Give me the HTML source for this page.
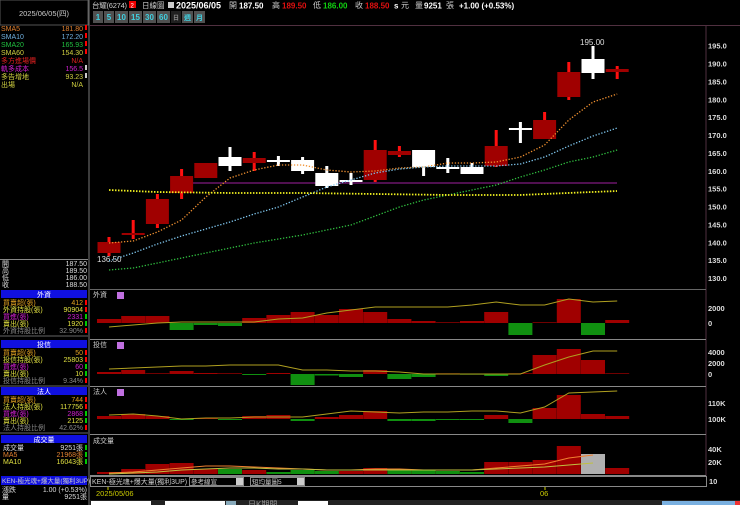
<!DOCTYPE html><html><head><meta charset="utf-8"><style>
body{margin:0;width:740px;height:505px;background:#000;overflow:hidden;font-family:"Liberation Sans","Noto Sans CJK TC",sans-serif;}
svg text{font-family:"Liberation Sans","Noto Sans CJK TC",sans-serif;}
</style></head><body>
<svg id="s" width="740" height="505" xmlns="http://www.w3.org/2000/svg" style="position:absolute;left:0;top:0">
<rect width="740" height="505" fill="#000"/>
<rect x="0" y="0" width="88" height="25" fill="#000" stroke="#555" stroke-width="1"/>
<text x="44" y="16" fill="#ccc" font-size="7.5" text-anchor="middle">2025/06/05(四)</text>
<line x1="89" y1="0" x2="89" y2="505" stroke="#777"/>
<g font-size="7" id="lp"></g>
<g font-size="8">
<text x="92" y="8" fill="#ccc" font-size="7.5" textLength="35">台耀(6274)</text>
<rect x="129" y="1" width="7" height="7" fill="#e00"/><text x="130.5" y="7.5" fill="#fff" font-size="6">2</text>
<text x="142" y="8" fill="#ccc" font-size="7.5">日線圖</text>
<rect x="168" y="2" width="6" height="6" fill="#ccc"/>
<text x="176" y="8.5" fill="#fff" font-size="9" font-weight="bold">2025/06/05</text>
<text x="229" y="8" fill="#ccc">開</text><text x="239" y="8.5" fill="#fff" font-weight="bold">187.50</text>
<text x="272" y="8" fill="#ccc">高</text><text x="282" y="8.5" fill="#e01010" font-weight="bold">189.50</text>
<text x="313" y="8" fill="#ccc">低</text><text x="323" y="8.5" fill="#10d010" font-weight="bold">186.00</text>
<text x="355" y="8" fill="#ccc">收</text><text x="365" y="8.5" fill="#e01010" font-weight="bold">188.50</text>
<text x="394" y="8.5" fill="#fff" font-weight="bold">s</text><text x="401" y="8" fill="#ccc">元</text>
<text x="415" y="8" fill="#ccc">量</text><text x="424" y="8.5" fill="#fff" font-weight="bold">9251</text><text x="446" y="8" fill="#ccc">張</text>
<text x="459" y="8.5" fill="#fff" font-weight="bold">+1.00 (+0.53%)</text>
</g>
<g id="btn" font-size="8" font-weight="bold"></g>
<line x1="90" y1="25.5" x2="740" y2="25.5" stroke="#503040"/>
<g fill="none" stroke="#555">
<line x1="706" y1="26" x2="706" y2="476" stroke="#503040"/>
<line x1="90" y1="289.5" x2="706" y2="289.5" stroke="#666"/>
<line x1="90" y1="339.5" x2="706" y2="339.5" stroke="#888"/>
<line x1="90" y1="386.5" x2="706" y2="386.5" stroke="#888"/>
<line x1="90" y1="434.5" x2="706" y2="434.5" stroke="#888"/>
<line x1="90" y1="475.5" x2="706" y2="475.5" stroke="#888"/>
</g>
<g id="g"></g>
<g font-size="7" fill="#ccc">
<text x="93" y="297">外資</text><text x="93" y="347">投信</text><text x="93" y="394">法人</text><text x="93" y="443">成交量</text>
</g>
<rect x="117" y="292" width="7" height="7" fill="#c070e0"/><rect x="117" y="342" width="7" height="7" fill="#c070e0"/><rect x="117" y="389" width="7" height="7" fill="#c070e0"/>
<g font-size="7.5" fill="#ddd" font-weight="bold" id="ax"></g>
<rect x="90.5" y="476.5" width="616" height="10" fill="#000" stroke="#888"/>
<text x="92" y="484" fill="#ccc" font-size="7">KEN-極光魂+爆大量(獨利3UP)</text>
<rect x="189.5" y="477.5" width="54" height="8" fill="#000" stroke="#888"/><text x="191" y="484" fill="#ccc" font-size="6.5">參考線宣</text><rect x="236" y="478" width="7" height="7" fill="#ccc"/>
<rect x="250.5" y="477.5" width="54" height="8" fill="#000" stroke="#888"/><text x="252" y="484" fill="#ccc" font-size="6.5">短均量圖5</text><rect x="297" y="478" width="7" height="7" fill="#ccc"/>
<text x="709" y="484" fill="#ddd" font-size="7.5" font-weight="bold">10</text>
<line x1="108" y1="487" x2="108" y2="490" stroke="#cc0"/><line x1="545" y1="487" x2="545" y2="490" stroke="#cc0"/>
<text x="96" y="496" fill="#cc0" font-size="7.5">2025/05/06</text><text x="540" y="496" fill="#cc0" font-size="7.5">06</text>
<rect x="90" y="500" width="650" height="5" fill="#222"/>
<rect x="91" y="501" width="60" height="4" fill="#fff"/><rect x="165" y="501" width="60" height="4" fill="#fff"/><rect x="226" y="501" width="10" height="4" fill="#8ab"/>
<text x="248" y="507" fill="#999" font-size="8">日K期間</text><rect x="298" y="501" width="30" height="4" fill="#fff"/>
<rect x="662" y="501" width="78" height="4" fill="#7ab0e0"/><rect x="735" y="501" width="5" height="4" fill="#e33"/>
</svg>
<script>
const N='http://www.w3.org/2000/svg';
function el(p,t,a,txt){const e=document.createElementNS(N,t);for(const k in a)e.setAttribute(k,a[k]);if(txt!==undefined)e.textContent=txt;document.getElementById(p).appendChild(e);return e;}
const lp=[[35,'SMA5','181.80','#e08030','#e08030','r'],[43,'SMA10','172.20','#70b0e0','#70b0e0','r'],[51,'SMA20','165.93','#20c040','#20c040','r'],[59,'SMA60','154.30','#d0d040','#d0d040','r'],[67,'多方進場價','N/A','#e02020','#e02020',''],[75,'軌多成本','156.5','#d020d0','#d020d0','w'],[83,'多告增地','93.23','#d0d040','#d0d040','w'],[91,'出場','N/A','#d0d040','#d0d040','']];
lp.forEach(r=>{el('lp','text',{x:1,y:r[0]-4,fill:r[3]},r[1]);el('lp','text',{x:83,y:r[0]-4,fill:r[4],'text-anchor':'end'},r[2]);if(r[5])el('lp','rect',{x:85,y:r[0]-10,width:2,height:5,fill:r[5]=='r'?'#f00':'#ccc'});});
el('lp','line',{x1:0,y1:259.5,x2:88,y2:259.5,stroke:'#888'});
[['開','187.50'],['高','189.50'],['低','186.00'],['收','188.50']].forEach((r,i)=>{el('lp','text',{x:2,y:266+i*7,fill:'#ddd'},r[0]);el('lp','text',{x:87,y:266+i*7,fill:'#ddd','text-anchor':'end'},r[1]);});
function sect(y,title,rows){el('lp','rect',{x:1,y:y,width:86,height:8,fill:'#1010e0'});el('lp','text',{x:44,y:y+7,fill:'#fff','text-anchor':'middle'},title);
rows.forEach((r,i)=>{const yy=y+15+i*7;el('lp','text',{x:3,y:yy,fill:r[2]},r[0]);el('lp','text',{x:83,y:yy,fill:r[3]||r[2],'text-anchor':'end'},r[1]);if(r[4])el('lp','rect',{x:85,y:yy-5,width:2,height:5,fill:r[4]});});
el('lp','line',{x1:0,y1:y+15+rows.length*7-4,x2:88,y2:y+15+rows.length*7-4,stroke:'#666'});}
sect(290,'外資',[['買賣超(張)','412','#e0a020','#e0a020','#f00'],['外資持股(張)','90904','#e0e040','#e0e040','#f00'],['買進(張)','2331','#d020d0','#d020d0','#0c0'],['賣出(張)','1920','#e0e040','#e0e040','#0c0'],['外資持股比例','32.90%','#888','#888','#f00']]);
sect(340,'投信',[['買賣超(張)','50','#e0a020','#e0a020','#f00'],['投信持股(張)','25803','#e0e040','#e0e040','#f00'],['買進(張)','60','#d020d0','#d020d0','#0c0'],['賣出(張)','10','#e0e040','#e0e040','#0c0'],['投信持股比例','9.34%','#888','#888','#f00']]);
sect(387,'法人',[['買賣超(張)','744','#e0a020','#e0a020','#f00'],['法人持股(張)','117756','#e0e040','#e0e040','#f00'],['買進(張)','2868','#d020d0','#d020d0','#0c0'],['賣出(張)','2125','#e0e040','#e0e040','#0c0'],['法人持股比例','42.62%','#888','#888','#f00']]);
el('lp','rect',{x:1,y:435,width:86,height:8,fill:'#1010e0'});el('lp','text',{x:44,y:442,fill:'#fff','text-anchor':'middle'},'成交量');
[['成交量','9251張','#ddd'],['MA5','21968張','#e08030'],['MA10','16043張','#e0e040']].forEach((r,i)=>{el('lp','text',{x:3,y:450+i*7,fill:r[2]},r[0]);el('lp','text',{x:83,y:450+i*7,fill:r[2],'text-anchor':'end'},r[1]);el('lp','rect',{x:85,y:445+i*7,width:2,height:5,fill:'#0c0'});});
el('lp','rect',{x:1,y:476,width:86,height:9,fill:'#1010e0'});el('lp','text',{x:2,y:483,fill:'#ccc','font-size':6.5},'KEN-極光魂+爆大量(獨利3UP)');
el('lp','text',{x:2,y:492,fill:'#ddd'},'漲跌');el('lp','text',{x:87,y:492,fill:'#ddd','text-anchor':'end'},'1.00 (+0.53%)');
el('lp','text',{x:2,y:499,fill:'#ddd'},'量');el('lp','text',{x:87,y:499,fill:'#ddd','text-anchor':'end'},'9251張');
const bs=['1','5','10','15','30','60'];let bx=93;
bs.forEach(b=>{const w=b.length>1?13:10;el('btn','rect',{x:bx,y:11,width:w,height:12,fill:'#505050'});el('btn','text',{x:bx+w/2,y:20,fill:'#40d0e0','text-anchor':'middle'},b);bx+=w+1;});
el('btn','rect',{x:bx,y:11,width:10,height:12,fill:'#202020'});el('btn','text',{x:bx+5,y:20,fill:'#888','text-anchor':'middle','font-size':6},'日');bx+=11;
['週','月'].forEach(b=>{el('btn','rect',{x:bx,y:11,width:11,height:12,fill:'#505050'});el('btn','text',{x:bx+5.5,y:20,fill:'#40d0e0','text-anchor':'middle','font-size':7},b);bx+=12;});
const py=p=>45.7+(195-p)*3.574;
for(let p=130;p<=195;p+=5)el('ax','text',{x:708,y:py(p)+3},p.toFixed(1));
[['2000',311],['0',326],['4000',355],['2000',366],['0',377],['110K',406],['100K',422],['40K',452],['20K',465]].forEach(a=>el('ax','text',{x:708,y:a[1]},a[0]));
const X=i=>109+(i-1)*24.2;
const C=[[242,253,237,256,'r'],[233,235,220,239,'r'],[199,224,194,228,'r'],[176,193,169,199,'r'],[163,178,163,178,'r'],[157,166,147,171,'w'],[158,163,152,171,'r'],[160,162,156,166,'w'],[160,171,157,174,'w'],[173,186,166,188,'w'],[180,182,173,185,'w'],[150,180,140,182,'r'],[151,155,146,157,'r'],[150,167,150,176,'w'],[167,169,158,173,'w'],[167,174,163,174,'w'],[146,166,130,167,'r'],[128,130,122,143,'w'],[120,139,112,139,'r'],[72,97,62,100,'r'],[59,73,46,79,'w'],[69,72,66,79,'r']];
const g='g';
el(g,'line',{x1:190,y1:183,x2:617,y2:183,stroke:'#a020a0','stroke-width':1});
C.forEach((c,k)=>{const x=X(k+1);const col=c[4]=='r'?'#a00000':'#fff';const wc=c[4]=='r'?'#ff1010':'#fff';
el(g,'rect',{x:x-1.5,y:c[2],width:3,height:c[3]-c[2],fill:wc});
el(g,'rect',{x:x-11.5,y:c[0],width:23,height:Math.max(2,c[1]-c[0]),fill:col});});
el(g,'text',{x:580,y:45,fill:'#ddd','font-size':8},'195.00');
el(g,'text',{x:97,y:262,fill:'#ddd','font-size':8},'136.50');
function line(pts,col,dash,w){el(g,'polyline',{points:pts.map(p=>p.join(',')).join(' '),fill:'none',stroke:col,'stroke-width':w||1.3,'stroke-dasharray':dash||''});}
const ix=a=>a.map((y,i)=>[X(i+1),y]);
line(ix([243,241,232,220,197,178,170,165,165,170,172,171,168,167,163,163,162,157,145,120,102,94]),'#f09030','1.3 1.7');
line(ix([261,253,244,236,229,222,214,207,197,187,180,173,169,167,166,166,166,164,157,146,136,128]),'#80c8f0','1.3 1.7');
line(ix([270,268,263,258,253,248,243,239,235,230,225,216,207,200,195,190,185,177,170,162,157,150]),'#30c040','1.3 1.7');
line([[109,190],[157,192],[230,193],[302,193],[375,194],[450,195],[520,195],[568,193],[617,191]],'#f0f020','1.5 1.5',1.8);
function bars(zero,vals,gray){vals.forEach((v,k)=>{const x=X(k+1);let col=v>=0?'#a00000':'#109010';if(gray&&gray==k+1)col='#b0b0b0';
const h=Math.max(0.7,Math.abs(v));el(g,'rect',{x:x-12,y:v>=0?zero-h:zero,width:24,height:h,fill:col});});}
bars(323,[4,7,7,-7,-2,-3,5,8,11,8,14,11,4,2,0.5,2,11,-12,0.5,24,-12,3]);
bars(374,[2,4,0.5,3,1,0.5,-1,1,-11,-1.5,-3,4,-5,-3,0.5,-0.5,-2,0.5,19,25,14,0.5]);
bars(419,[3,5,3,-1,0.5,-1,3,4,-2,2,4,8,-2,-2,-1,-1,4,-4,11,24,5,3]);
bars(474,[2,5,10,11,5,5,4,2,4,3,3,6,4,4,3,2,12,12,14,28,20,6],21);
[6,8,9,10,13,14,15,16].forEach(i=>{const vv=[2,5,10,11,5,5,4,2,4,3,3,6,4,4,3,2][i-1];el(g,'rect',{x:X(i)-12,y:474-vv,width:24,height:vv,fill:'#109010'});});
line(ix([327,325,323,322,322,322,322,319,318,313,310,307,307,307,307,305,302,305,305,299,302,301]),'#b0a020','',1);
line(ix([369,368,367,366,366,365,365,365,370,370,371,371,372,374,374,374,374,374,365,357,351,351]),'#b0a020','',1);
line(ix([415,414,416,419,418,418,417,417,417,414,411,412,413,412,412,411,411,413,407,393,392,391]),'#b0a020','',1);
line(ix([473,472,470,468,466,466,467,468,469,470,470,469,469,470,470,470,468,466,464,458,455]),'#f08030','',1);
line(ix([474,473,472,470,469,468,468,469,469,470,470,470,470,470,470,470,469,468,467,465,463]),'#c0c040','',1);
</script>
</body></html>
